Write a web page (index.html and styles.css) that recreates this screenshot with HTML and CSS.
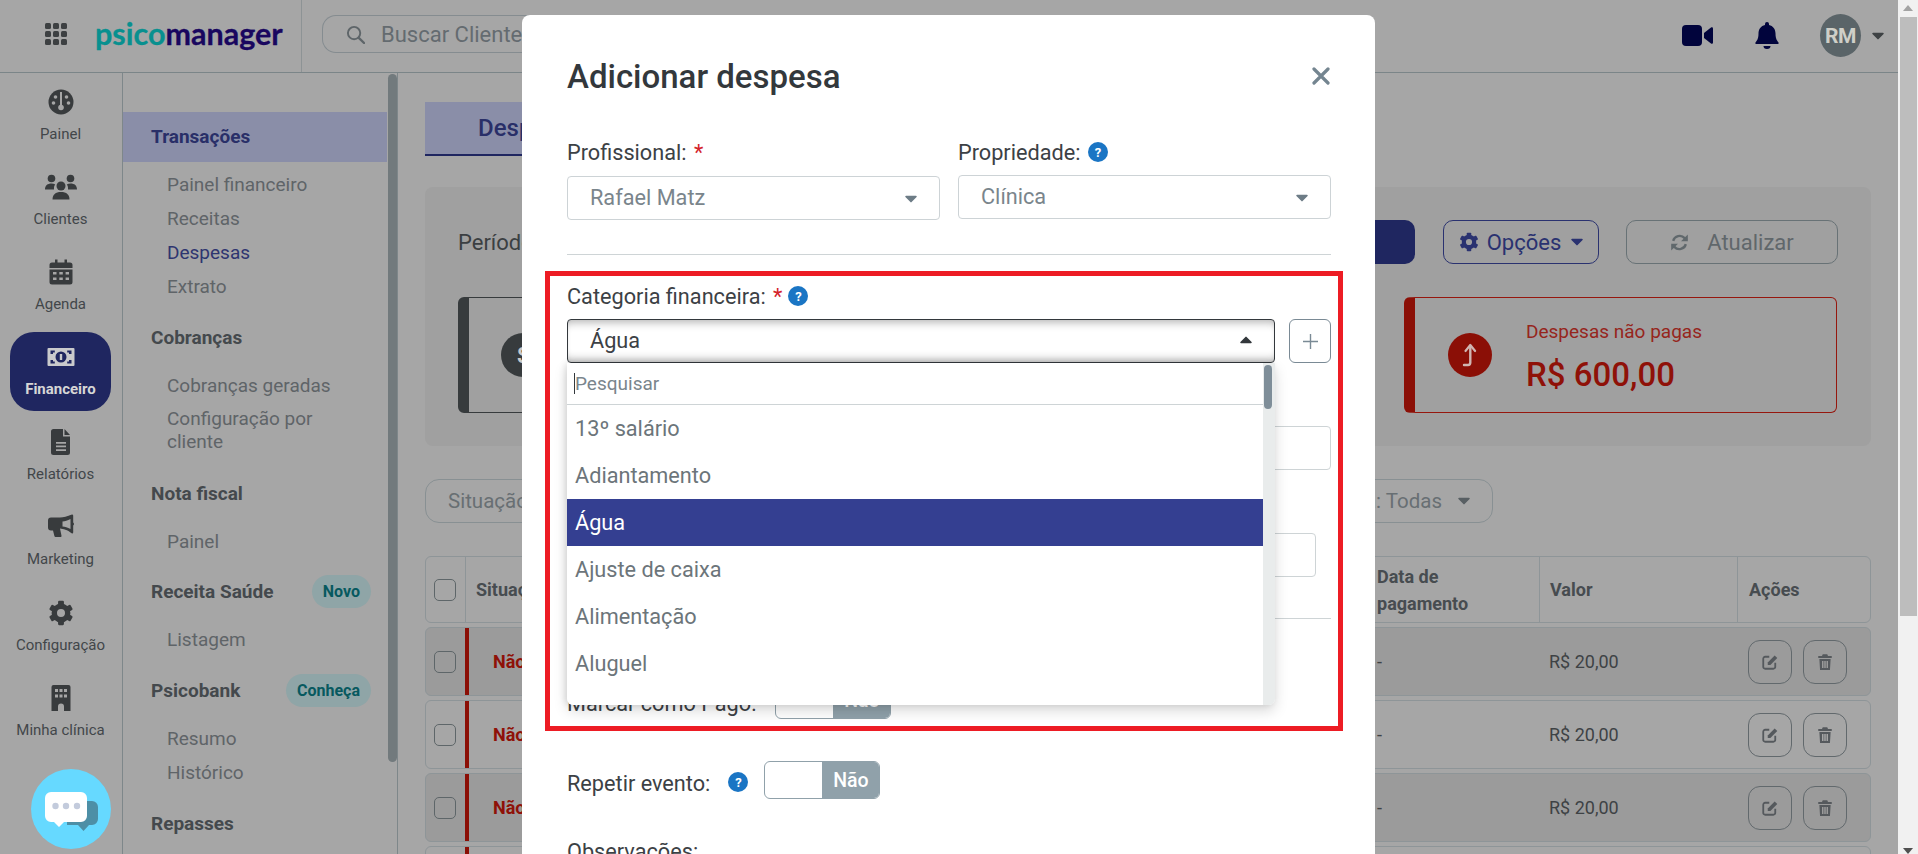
FILE: index.html
```html
<!DOCTYPE html>
<html lang="pt-BR">
<head>
<meta charset="utf-8">
<title>Psicomanager - Despesas</title>
<link rel="stylesheet" href="styles.css">
</head>
<body>
<svg class="defs" width="0" height="0" aria-hidden="true">
  <symbol id="i-gear" viewBox="0 0 24 24">
    <circle cx="12" cy="12" r="6.2" fill="none" stroke="currentColor" stroke-width="5"/>
    <g fill="currentColor">
      <rect x="9.3" y="0.8" width="5.4" height="5" rx="1"/>
      <rect x="9.3" y="0.8" width="5.4" height="5" rx="1" transform="rotate(60 12 12)"/>
      <rect x="9.3" y="0.8" width="5.4" height="5" rx="1" transform="rotate(120 12 12)"/>
      <rect x="9.3" y="0.8" width="5.4" height="5" rx="1" transform="rotate(180 12 12)"/>
      <rect x="9.3" y="0.8" width="5.4" height="5" rx="1" transform="rotate(240 12 12)"/>
      <rect x="9.3" y="0.8" width="5.4" height="5" rx="1" transform="rotate(300 12 12)"/>
    </g>
  </symbol>
  <symbol id="i-edit" viewBox="0 0 24 24">
    <path d="M11 5H5.5A2.5 2.5 0 0 0 3 7.5v11A2.5 2.5 0 0 0 5.5 21h11a2.5 2.5 0 0 0 2.500-2.500V13" fill="none" stroke="currentColor" stroke-width="2.400"/>
    <path d="M9 12.500 18.200 3.300l3.500 3.500L12.500 16H9z" fill="currentColor"/>
  </symbol>
  <symbol id="i-trash" viewBox="0 0 24 24">
    <path d="M9 1.500h6L16 4h5v2.500H3V4h5zM4.500 8h15l-.9 14.500H5.400zM8 10.500v9.500h2v-9.500zm3 0v9.500h2v-9.500zm3 0v9.500h2v-9.500z" fill="currentColor" fill-rule="evenodd"/>
  </symbol>
  <symbol id="i-caret" viewBox="0 0 12 8">
    <path d="M1 .8h10a.8.8 0 0 1 .6 1.300l-5 5a.8.8 0 0 1-1.200 0l-5-5A.8.8 0 0 1 1 .8z" fill="currentColor"/>
  </symbol>
</svg>

<div class="shell">
  <div class="page">
    <header class="topbar">
      <div class="brand">
        <svg class="grid-icon" viewBox="0 0 22 22"><g fill="currentColor"><rect width="6" height="6" rx="1.500"/><rect x="8" width="6" height="6" rx="1.500"/><rect x="16" width="6" height="6" rx="1.500"/><rect y="8" width="6" height="6" rx="1.500"/><rect x="8" y="8" width="6" height="6" rx="1.500"/><rect x="16" y="8" width="6" height="6" rx="1.500"/><rect y="16" width="6" height="6" rx="1.500"/><rect x="8" y="16" width="6" height="6" rx="1.500"/><rect x="16" y="16" width="6" height="6" rx="1.500"/></g></svg>
        <span class="logo"><span class="logo-a">psico</span><span class="logo-b">manager</span></span>
      </div>
      <div class="searchwrap">
        <div class="search">
          <svg class="search-icon" viewBox="0 0 20 20"><circle cx="8.500" cy="8.500" r="6.500" fill="none" stroke="currentColor" stroke-width="2"/><path d="M13.500 13.500 19 19" stroke="currentColor" stroke-width="2.400" stroke-linecap="round"/></svg>
          <span>Buscar Clientes</span>
        </div>
      </div>
      <div class="top-actions">
        <svg class="t-video" viewBox="0 0 31 21"><rect width="20" height="21" rx="4" fill="currentColor"/><path d="M22 8l7-5.500c.8-.6 2-.1 2 1v14c0 1.100-1.200 1.600-2 1L22 13z" fill="currentColor"/></svg>
        <svg class="t-bell" viewBox="0 0 24 27"><path d="M12 0a2 2 0 0 1 2 2v1c4 1 6.500 4 6.500 8.500 0 6 2 7.500 3 9 .5.800 0 1.500-1 1.500H1.500c-1 0-1.500-.7-1-1.500 1-1.500 3-3 3-9C3.500 7 6 4 10 3V2a2 2 0 0 1 2-2zM8.500 24h7a3.500 3 0 0 1-7 0z" fill="currentColor"/></svg>
        <span class="avatar">RM</span>
        <svg class="t-caret"><use href="#i-caret"/></svg>
      </div>
    </header>

    <div class="body">
      <nav class="rail">
        <a class="rail-item">
          <svg class="rail-icon" viewBox="0 0 26 26"><circle cx="13" cy="13" r="12.500" fill="currentColor"/><g fill="#a6a6a6"><circle cx="5.500" cy="14" r="1.800"/><circle cx="20.500" cy="14" r="1.800"/><circle cx="7.500" cy="8" r="1.800"/><circle cx="18.500" cy="8" r="1.800"/><rect x="12" y="3" width="2" height="14"/><circle cx="13" cy="18.500" r="2.800"/></g></svg>
          <span>Painel</span>
        </a>
        <a class="rail-item">
          <svg class="rail-icon wide" viewBox="0 0 32 26"><g fill="currentColor"><circle cx="6.500" cy="4.500" r="3.800"/><circle cx="25.500" cy="4.500" r="3.800"/><path d="M0 15.500C0 11.500 2.500 9.500 6.500 9.500c1.500 0 2.700.4 3.700 1-1 1.200-1.400 2.800-1.200 5H.5z"/><path d="M32 15.500c0-4-2.500-6-6.500-6-1.500 0-2.700.4-3.700 1 1 1.200 1.400 2.800 1.200 5h8.500z"/><circle cx="16" cy="12" r="4.500"/><path d="M7.500 25.500c0-5 3-7.500 8.500-7.500s8.500 2.500 8.500 7.500z"/></g></svg>
          <span>Clientes</span>
        </a>
        <a class="rail-item">
          <svg class="rail-icon" viewBox="0 0 26 26"><path d="M7 .5h2.500v3h7v-3H19v3h3a2.500 2.500 0 0 1 2.500 2.500V9h-23V6A2.500 2.500 0 0 1 4 3.500h3z" fill="currentColor"/><path d="M1.500 10.500h23V23a2.500 2.500 0 0 1-2.500 2.500H4A2.500 2.500 0 0 1 1.500 23zM5 13v2.600h3.500V13zm6.300 0v2.600h3.500V13zm6.300 0v2.600H21V13zM5 18.500v2.600h3.500v-2.600zm6.300 0v2.600h3.500v-2.600zm6.300 0v2.600H21v-2.600z" fill="currentColor" fill-rule="evenodd"/></svg>
          <span>Agenda</span>
        </a>
        <a class="rail-item active">
          <svg class="rail-icon wide money" viewBox="0 0 28 20"><path d="M1.500 1h25a1 1 0 0 1 1 1v16a1 1 0 0 1-1 1h-25a1 1 0 0 1-1-1V2a1 1 0 0 1 1-1zM14 4.500a5.500 5.500 0 1 0 0 11 5.500 5.500 0 0 0 0-11zM3.500 3.500v3.500H6V5.500h1.800V3.500zm16.700 0v2h1.800V7h2.500V3.500zM3.500 13v3.500h4.300v-2H6V13zm18.500 0v1.500h-1.800v2h4.300V13z" fill="currentColor" fill-rule="evenodd"/><rect x="12.800" y="7" width="2.400" height="6" fill="currentColor"/></svg>
          <span>Financeiro</span>
        </a>
        <a class="rail-item">
          <svg class="rail-icon" viewBox="0 0 26 26"><path d="M5.500 0H15v7.500h7V23.500a2.500 2.500 0 0 1-2.500 2.500h-14A2.500 2.500 0 0 1 3 23.500v-21A2.500 2.500 0 0 1 5.500 0zM8 13v1.700h10V13zm0 3.600v1.700h10v-1.700zm0 3.600v1.700h10v-1.700z" fill="currentColor" fill-rule="evenodd"/><path d="M16.500 0 22 6h-5.500z" fill="currentColor"/></svg>
          <span>Relatórios</span>
        </a>
        <a class="rail-item">
          <svg class="rail-icon" viewBox="0 0 26 26"><path d="M24 .5c.8 0 1.200.6 1.200 1.300v6.700c.6.400.8 1 .8 1.500s-.2 1.100-.8 1.500v6.700c0 .7-.5 1.300-1.200 1.300-5-4-8.500-4.600-12-5l1.500 7.200c.1.700-.3 1.300-1 1.300H7.500c-.5 0-1-.4-1.100-.9L5 16.500H3a3 3 0 0 1-3-3v-7a3 3 0 0 1 3-3h9c3.500 0 7-1 12-3zM22.500 5c-3 1.700-5.500 2.300-8 2.600v4.800c2.500.3 5 .9 8 2.600z" fill="currentColor" fill-rule="evenodd"/></svg>
          <span>Marketing</span>
        </a>
        <a class="rail-item">
          <svg class="rail-icon"><use href="#i-gear"/></svg>
          <span>Configuração</span>
        </a>
        <a class="rail-item">
          <svg class="rail-icon" viewBox="0 0 26 26"><path d="M5.500 0h15A2 2 0 0 1 22.500 2v24H16v-4.500a3 3 0 0 0-6 0V26H3.500V2a2 2 0 0 1 2-2zM7 4v3h3V4zm4.500 0v3h3V4zM16 4v3h3V4zM7 9.500v3h3v-3zm4.500 0v3h3v-3zm4.500 0v3h3v-3z" fill="currentColor" fill-rule="evenodd"/></svg>
          <span>Minha clínica</span>
        </a>
      </nav>

      <aside class="submenu">
        <div class="sub-list">
          <div class="sub-head current">Transações</div>
          <div class="sub-items first">
            <a>Painel financeiro</a><a>Receitas</a><a class="on">Despesas</a><a>Extrato</a>
          </div>
          <div class="sub-head">Cobranças</div>
          <div class="sub-items">
            <a>Cobranças geradas</a><a class="two">Configuração por cliente</a>
          </div>
          <div class="sub-head">Nota fiscal</div>
          <div class="sub-items tight"><a>Painel</a></div>
          <div class="sub-head">Receita Saúde <span class="badge">Novo</span></div>
          <div class="sub-items"><a>Listagem</a></div>
          <div class="sub-head">Psicobank <span class="badge">Conheça</span></div>
          <div class="sub-items"><a>Resumo</a><a>Histórico</a></div>
          <div class="sub-head">Repasses</div>
        </div>
        <div class="sub-scroll"><div class="sub-thumb"></div></div>
      </aside>

      <main class="main">
        <div class="tabs"><div class="tab">Despesas</div></div>

        <section class="panel">
          <div class="panel-row">
            <span class="period">Período</span>
            <div class="panel-actions">
              <button class="btn btn-primary" type="button"></button>
              <button class="btn btn-options" type="button"><svg class="btn-gear"><use href="#i-gear"/></svg>Opções<svg class="btn-caret"><use href="#i-caret"/></svg></button>
              <button class="btn btn-refresh" type="button">
                <svg class="btn-sync" viewBox="0 0 24 24"><path d="M4 10A8.500 8.500 0 0 1 18.500 6.500L21 9" fill="none" stroke="currentColor" stroke-width="3"/><path d="M22.500 2v8.500H14z" fill="currentColor"/><path d="M20 14A8.500 8.500 0 0 1 5.500 17.500L3 15" fill="none" stroke="currentColor" stroke-width="3"/><path d="M1.500 22v-8.500H10z" fill="currentColor"/></svg>
                Atualizar
              </button>
            </div>
          </div>
          <div class="cards">
            <div class="card card-dark"><span class="card-dot">$</span></div>
            <div class="card card-mid"></div>
            <div class="card card-red">
              <span class="card-dot red">
                <svg viewBox="0 0 20 24"><path d="M4 22h4c1.500 0 2.300-1 2.300-2.500V3" fill="none" stroke="currentColor" stroke-width="2.400" stroke-linecap="round"/><path d="M5.500 8 10.300 2l4.800 6" fill="none" stroke="currentColor" stroke-width="2.200" stroke-linecap="round" stroke-linejoin="round"/></svg>
              </span>
              <div class="card-text">
                <div class="card-label">Despesas não pagas</div>
                <div class="card-value">R$ 600,00</div>
              </div>
            </div>
          </div>
        </section>

        <div class="filters">
          <div class="pill pill-first">Situação: Todas</div>
          <div class="pill pill-last">Categoria: Todas<svg class="pill-caret"><use href="#i-caret"/></svg></div>
        </div>

        <div class="table">
          <div class="thead trow">
            <div class="cell check"><span class="box"></span></div>
            <div class="cell sep">Situação</div>
            <div class="cell"><span>Data de<br>pagamento</span></div>
            <div class="cell sep">Valor</div>
            <div class="cell sep">Ações</div>
          </div>
          <div class="tr trow shaded">
            <div class="cell check"><span class="box"></span></div>
            <div class="cell status">Não pago</div>
            <div class="cell">-</div>
            <div class="cell">R$ 20,00</div>
            <div class="cell acts"><span class="act"><svg><use href="#i-edit"/></svg></span><span class="act"><svg><use href="#i-trash"/></svg></span></div>
          </div>
          <div class="tr trow">
            <div class="cell check"><span class="box"></span></div>
            <div class="cell status">Não pago</div>
            <div class="cell">-</div>
            <div class="cell">R$ 20,00</div>
            <div class="cell acts"><span class="act"><svg><use href="#i-edit"/></svg></span><span class="act"><svg><use href="#i-trash"/></svg></span></div>
          </div>
          <div class="tr trow shaded">
            <div class="cell check"><span class="box"></span></div>
            <div class="cell status">Não pago</div>
            <div class="cell">-</div>
            <div class="cell">R$ 20,00</div>
            <div class="cell acts"><span class="act"><svg><use href="#i-edit"/></svg></span><span class="act"><svg><use href="#i-trash"/></svg></span></div>
          </div>
          <div class="tr trow">
            <div class="cell check"></div>
            <div class="cell status"></div>
          </div>
        </div>
      </main>
    </div>
  </div>

  <div class="pagebar">
    <svg class="pb-arrow up" viewBox="0 0 10 6"><path d="M5 0l5 6H0z" fill="currentColor"/></svg>
    <div class="pb-thumb"></div>
    <svg class="pb-arrow down" viewBox="0 0 10 6"><path d="M5 6 10 0H0z" fill="currentColor"/></svg>
  </div>
</div>

<button class="chat" type="button" aria-label="Chat">
  <svg viewBox="0 0 53 40"><path d="M22 10h25a6 6 0 0 1 6 6v12a6 6 0 0 1-6 6h-3l-5.500 6-5.500-6H22z" fill="#4d8fa6"/><path d="M6 1h30a6 6 0 0 1 6 6v18a6 6 0 0 1-6 6H19l-5 5-5-5H6a6 6 0 0 1-6-6V7a6 6 0 0 1 6-6z" fill="#fff"/><circle cx="10.500" cy="15" r="3.200" fill="#c3cbdc"/><circle cx="21" cy="15" r="3.200" fill="#c3cbdc"/><circle cx="32" cy="15" r="3.200" fill="#c3cbdc"/></svg>
</button>

<div class="overlay">
  <div class="modal">
    <div class="modal-head">
      <h2>Adicionar despesa</h2>
      <svg class="close" viewBox="0 0 18 18"><path d="M2 2l14 14M16 2 2 16" stroke="currentColor" stroke-width="3.200" stroke-linecap="round"/></svg>
    </div>

    <div class="form-row">
      <div class="field">
        <label class="lbl">Profissional: <b class="req">*</b></label>
        <div class="sel"><span>Rafael Matz</span><svg class="sel-caret"><use href="#i-caret"/></svg></div>
      </div>
      <div class="field">
        <label class="lbl lbl-tight">Propriedade: <span class="help">?</span></label>
        <div class="sel"><span>Clínica</span><svg class="sel-caret"><use href="#i-caret"/></svg></div>
      </div>
    </div>

    <hr class="rule rule-a">

    <div class="field">
      <label class="lbl lbl-tight">Categoria financeira: <b class="req">*</b> <span class="help">?</span></label>
      <div class="sel-row">
        <div class="sel open"><span>Água</span><svg class="sel-caret up"><use href="#i-caret"/></svg></div>
        <button class="plus" type="button"><svg viewBox="0 0 14 14"><path d="M7 0v14M0 7h14" stroke="currentColor" stroke-width="1.300"/></svg></button>
        <div class="dropdown">
          <div class="dd-main">
            <div class="dd-search"><span class="caret-bar"></span>Pesquisar</div>
            <div class="dd-item">13º salário</div>
            <div class="dd-item">Adiantamento</div>
            <div class="dd-item chosen">Água</div>
            <div class="dd-item">Ajuste de caixa</div>
            <div class="dd-item">Alimentação</div>
            <div class="dd-item">Aluguel</div>
          </div>
          <div class="dd-track"><div class="dd-thumb"></div></div>
        </div>
      </div>
    </div>

    <div class="ghost ghost-a"></div>
    <div class="ghost ghost-b"></div>
    <hr class="rule rule-b">

    <div class="toggle-row row-paid">
      <span class="lbl-inline">Marcar como Pago:</span>
      <div class="toggle"><span class="t-off"></span><span class="t-no">Não</span></div>
    </div>
    <div class="toggle-row row-repeat">
      <span class="lbl-inline">Repetir evento:</span>
      <span class="help">?</span>
      <div class="toggle"><span class="t-off"></span><span class="t-no">Não</span></div>
    </div>
    <label class="lbl obs">Observações:</label>

    <div class="annotation"></div>
  </div>
</div>
</body>
</html>
```

FILE: styles.css
```css
* { box-sizing: border-box; }
html, body { margin: 0; height: 854px; overflow: hidden; }
body { font-family: Roboto, "Liberation Sans", sans-serif; background: #a6a6a6; color: #3f4347; }
.defs { position: absolute; }
a { display: block; }
button { font-family: inherit; }

.shell { display: flex; width: 1918px; height: 854px; }
.page { width: 1898px; height: 854px; overflow: hidden; display: flex; flex-direction: column; }

/* top bar */
.topbar { height: 73px; flex: none; display: flex; border-bottom: 1px solid #7b8588; }
.brand { width: 302px; flex: none; display: flex; align-items: center; padding-left: 45px; border-right: 1px solid #8d9395; }
.grid-icon { width: 22px; height: 22px; flex: none; color: #3d4042; margin-right: 28px; margin-top: -4px; }
.logo { font-family: Lato, sans-serif; font-size: 30.500px; font-weight: 700; line-height: 40px; margin-top: -6px; -webkit-text-stroke: .3px; white-space: nowrap; }
.logo-a { color: #08908f; }
.logo-b { color: #19075f; }
.searchwrap { flex: 1; padding: 15px 0 0 20px; }
.search { width: 700px; height: 38px; border: 1px solid #858c90; border-right: 0; border-radius: 14px 0 0 14px; display: flex; align-items: center; padding-left: 23px; font-size: 22px; color: #646b70; }
.search-icon { width: 19px; height: 19px; margin-right: 16px; color: #5e6569; }
.top-actions { position: relative; display: flex; align-items: center; padding-right: 14px; margin-top: -1px; }
.t-video { width: 31px; height: 21px; color: #01043c; margin-right: 42px; }
.t-bell { width: 24px; height: 27px; color: #01043c; margin-right: 41px; }
.avatar { width: 41px; height: 43px; border-radius: 50%; background: #5a6468; color: #cfcfc8; font-weight: 700; font-size: 21px; display: flex; align-items: center; justify-content: center; letter-spacing: -.5px; margin-right: 11px; }
.t-caret { width: 12px; height: 8px; color: #3e4244; }

.body { flex: 1; display: flex; min-height: 0; }

/* rail */
.rail { width: 123px; flex: none; border-right: 1px solid #7e878a; padding: 3.500px 11px 0 10px; display: flex; flex-direction: column; gap: 6.200px; }
.rail-item { height: 79px; flex: none; display: flex; flex-direction: column; align-items: center; padding-top: 12px; font-size: 15px; line-height: 20px; color: #42464a; border-radius: 24px; white-space: nowrap; }
.rail-icon { width: 26px; height: 26px; color: #383b3d; margin-bottom: 9px; flex: none; }
.rail-icon.wide { width: 32px; }
.rail-item.active { background: #1f2660; color: #d6d6d6; font-weight: 700; }
.rail-item.active .rail-icon { color: #c9cacc; }
.money { width: 28px !important; }

/* submenu */
.submenu { width: 275px; flex: none; border-right: 1px solid #7e878a; display: flex; }
.sub-list { width: 264px; flex: none; padding-top: 39px; }
.sub-head { height: 50px; display: flex; align-items: center; justify-content: space-between; padding: 0 16px 0 28px; font-size: 19px; font-weight: 700; color: #44494d; }
.sub-head.current { background: #8a8ea8; color: #292f68; padding-bottom: 2px; }
.sub-items { padding: 7px 0 8px 44px; font-size: 19px; color: #5f6468; }
.sub-items.first { padding-top: 6px; }
.sub-items.tight { padding-bottom: 7px; }
.sub-items a { height: 34px; line-height: 34px; }
.sub-items a.on { color: #2e3570; }
.sub-items a.two { height: 57px; width: 190px; line-height: 23px; padding-top: 4px; }
.badge { height: 33px; border-radius: 17px; background: #8fa5a7; color: #07595f; font-size: 16px; font-weight: 700; padding: 0 11px; display: flex; align-items: center; }
.sub-scroll { flex: 1; padding-left: 1px; }
.sub-thumb { width: 9px; height: 688px; margin-top: 1px; border-radius: 5px; background: #727a7d; }

/* main */
.main { flex: 1; min-width: 0; padding: 29px 27px 0 27px; }
.tabs { height: 54px; }
.tab { width: 240px; height: 54px; background: #8a8ea8; border-bottom: 2px solid #1f2660; padding-left: 53px; font-size: 24px; font-weight: 500; line-height: 52px; color: #292f68; }
.panel { margin-top: 31px; height: 259px; background: #a0a0a0; border-radius: 8px; padding: 33px 33px 0 33px; }
.panel-row { display: flex; align-items: center; justify-content: space-between; height: 44px; }
.period { font-size: 22px; color: #3b3f42; }
.panel-actions { display: flex; gap: 27px; height: 44px; }
.btn { height: 44px; border-radius: 10px; background: none; font-size: 22px; display: flex; align-items: center; justify-content: center; padding: 0; }
.btn-primary { width: 215px; background: #1f2660; border: 0; margin-right: 1px; }
.btn-options { width: 156px; border: 1px solid #2a3270; color: #2a3270; }
.btn-gear { width: 20px; height: 20px; margin-right: 8px; }
.btn-caret { width: 12px; height: 8px; margin-left: 10px; }
.btn-refresh { width: 212px; border: 1px solid #687276; color: #60676b; }
.btn-sync { width: 19px; height: 19px; margin-right: 18px; color: #60686c; }
.cards { display: grid; grid-template-columns: 433px 433px 433px; column-gap: 40px; margin-top: 33px; }
.card { height: 116px; border-radius: 6px; display: flex; align-items: center; }
.card-dark { border: 1px solid #373b3d; border-left: 11px solid #373b3d; padding-left: 32px; }
.card-mid { border: 1px solid #373b3d; }
.card-dot { width: 44px; height: 44px; border-radius: 50%; background: #373b3d; color: #c9c9c9; font-size: 22px; font-weight: 700; display: flex; align-items: center; justify-content: center; flex: none; }
.card-red { border: 1px solid #96170e; border-left: 11px solid #8b0f06; padding-left: 33px; color: #8f1108; }
.card-dot.red { background: #8b0f06; color: #d0b6b2; margin-right: 34px; }
.card-dot.red svg { width: 20px; height: 24px; }
.card-label { font-size: 19px; line-height: 24px; margin-top: 5px; color: #96251c; }
.card-value { font-size: 33px; font-weight: 500; line-height: 42px; margin-top: 10px; }
.filters { display: flex; justify-content: space-between; margin-top: 33px; width: 1068px; height: 44px; }
.pill { height: 44px; border: 1px solid #889093; border-radius: 14px; font-size: 20.500px; color: #686f73; display: flex; align-items: center; padding: 0 22px; white-space: nowrap; }
.pill-caret { width: 12px; height: 8px; margin-left: 16px; color: #585f63; }
.table { margin-top: 33px; display: flex; flex-direction: column; gap: 4px; }
.trow { display: grid; grid-template-columns: 39px 901px 173px 198px 135px; border: 1px solid #8e9598; border-radius: 6px; width: 1446px; }
.thead { height: 67px; font-weight: 700; font-size: 18px; line-height: 27px; color: #474c50; }
.tr { height: 69px; font-size: 18px; color: #3e4245; }
.tr.shaded { background: #9b9b9b; }
.cell { display: flex; align-items: center; padding-left: 11px; }
.check { padding-left: 8px; }
.thead .sep { padding-left: 10px; }
.thead .cell:nth-child(4) { padding-left: 10px; }
.thead .cell:nth-child(5) { padding-left: 11px; }
.tr .cell:nth-child(4) { padding-left: 10px; }
.sep { border-left: 1px solid #8e9598; }
.box { width: 22px; height: 22px; border: 1px solid #5e6669; border-radius: 5px; }
.status { border-left: 4px solid #8b0f06; padding-left: 24px; color: #8f1108; font-weight: 700; }
.acts { gap: 11px; padding-left: 11px; }
.act { width: 44px; height: 44px; border: 1px solid #62696d; border-radius: 12px; display: flex; align-items: center; justify-content: center; color: #55595d; }
.act svg { width: 18px; height: 18px; }

/* page scrollbar */
.pagebar { width: 20px; height: 854px; background: #f1f1f1; position: relative; padding: 17px 1px 0 2px; }
.pb-thumb { height: 599px; background: #bdbdbd; }
.pb-arrow { position: absolute; left: 5px; width: 10px; height: 6px; color: #a3a3a3; }
.pb-arrow.up { top: 5px; }
.pb-arrow.down { bottom: 0; color: #505050; }

/* chat */
.chat { position: fixed; left: 31px; top: 769px; width: 80px; height: 80px; border-radius: 50%; border: 0; background: #66d9ff; padding: 22px 13px 19px 14px; }
.chat svg { width: 53px; height: 40px; display: block; }

/* modal */
.overlay { position: fixed; left: 0; top: 0; width: 1898px; height: 854px; overflow: hidden; }
.modal { position: relative; margin: 15px 0 0 522px; width: 853px; height: 900px; background: #fff; border-radius: 8px 8px 0 0; padding: 41px 44px 0 45px; color: #3c4145; }
.modal-head { display: flex; justify-content: space-between; align-items: center; height: 40px; }
.modal-head h2 { margin: 0; font-size: 33px; font-weight: 500; color: #33383c; }
.close { width: 18px; height: 18px; color: #748590; margin-right: 1px; }
.form-row { display: grid; grid-template-columns: 373px 373px; column-gap: 18px; margin-top: 44px; }
.lbl { display: flex; align-items: center; gap: 2px; height: 24px; margin-bottom: 12px; font-size: 21.700px; white-space: pre; }
.lbl-tight { margin-bottom: 11px; }
.req { color: #d4232b; font-weight: 400; }
.req + .help { margin-left: 4px; }
.help { width: 20px; height: 20px; border-radius: 50%; background: #1a75c4; color: #fff; font-size: 13px; font-weight: 700; display: inline-flex; align-items: center; justify-content: center; flex: none; }
.sel { height: 44px; border: 1px solid #cdd3d6; border-radius: 4px; display: flex; align-items: center; justify-content: space-between; padding: 0 23px 2px 22px; font-size: 21.700px; color: #7a858c; }
.sel-caret { width: 12px; height: 8px; color: #6d7c86; margin-right: -1px; margin-top: 4px; }
.sel-caret.up { transform: rotate(180deg); color: #33383c; margin-top: 0; }
.rule { border: 0; border-top: 1px solid #ced4d6; margin: 0; }
.rule-a { margin-top: 34px; }
.rule-a + .field { margin-top: 29px; }
.sel-row { position: relative; display: flex; gap: 14px; }
.sel.open { flex: 1; border-color: #33383c; color: #3c4145; box-shadow: inset 0 9px 10px -7px rgba(0, 0, 0, .32), inset 0 -9px 10px -7px rgba(0, 0, 0, .32); }
.plus { width: 42px; height: 44px; flex: none; border: 1px solid #7a8a95; border-radius: 6px; background: #fff; padding: 0; color: #7a8a95; display: flex; align-items: center; justify-content: center; }
.plus svg { width: 15px; height: 15px; }
.dropdown { position: absolute; left: 0; top: 44px; width: 708px; height: 342px; display: flex; background: #fff; border-radius: 0 0 6px 6px; overflow: hidden; box-shadow: 0 6px 14px rgba(0, 0, 0, .15), -2px 0 6px rgba(0, 0, 0, .1); z-index: 2; }
.dd-main { width: 696px; flex: none; }
.dd-search { height: 42px; border-bottom: 1px solid #ced4d6; padding-left: 7px; display: flex; align-items: center; font-size: 19px; color: #7a858c; }
.caret-bar { width: 1px; height: 21px; background: #33383c; margin-right: 0; }
.dd-item { height: 47px; line-height: 47px; padding-left: 8px; font-size: 21.700px; color: #6c757a; }
.dd-item.chosen { background: #343f91; color: #fff; }
.dd-track { flex: 1; background: #e9ecec; padding: 2px 1px 0 1px; }
.dd-thumb { width: 8px; height: 44px; border-radius: 4px; background: #7f8e99; }
.ghost { border: 1px solid #ced4d6; border-radius: 4px; height: 44px; }
.ghost-a { margin-top: 63px; }
.ghost-b { margin-top: 63px; width: 749px; }
.rule-b { margin-top: 41px; }
.toggle-row { display: flex; align-items: center; font-size: 21.700px; height: 38px; }
.row-paid { margin-top: 62px; }
.row-repeat { margin-top: 42px; }
.lbl-inline { margin: 6px 19px 0 0; white-space: nowrap; }
.row-repeat .help { margin: 4px 16px 0 -1px; }
.toggle { width: 116px; height: 38px; border: 1px solid #90a1aa; border-radius: 6px; display: flex; overflow: hidden; background: #fff; }
.t-off { width: 57px; }
.t-no { flex: 1; background: #90a1aa; color: #fff; font-size: 19.500px; font-weight: 500; display: flex; align-items: center; justify-content: center; }
.obs { margin-top: 40px; }
.annotation { position: absolute; left: 23px; top: 256px; width: 798px; height: 460px; border: 5px solid #ed1c24; pointer-events: none; z-index: 3; }
```
